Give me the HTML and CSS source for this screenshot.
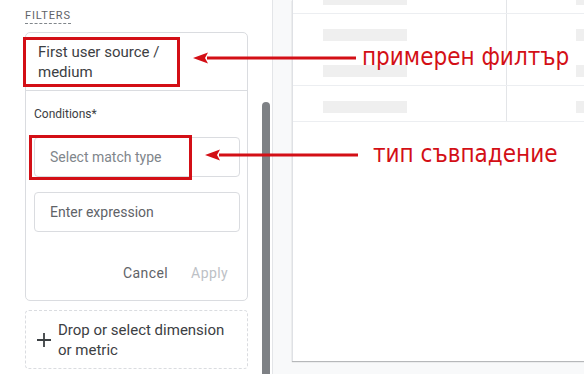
FILE: index.html
```html
<!DOCTYPE html>
<html lang="en">
<head>
<meta charset="utf-8">
<link rel="stylesheet" href="styles.css">
</head>
<body>
<div class="page">
  <aside class="panel">
    <div class="panel-inner">
      <div class="section-label">FILTERS</div>
      <div class="filter-card">
        <div class="filter-head">First user source /<br>medium</div>
        <div class="filter-body">
          <div class="cond-label">Conditions*</div>
          <div class="field placeholder">Select match type</div>
          <div class="field text">Enter expression</div>
          <div class="actions">
            <span class="btn cancel">Cancel</span>
            <span class="btn apply">Apply</span>
          </div>
        </div>
      </div>
      <div class="drop-zone">
        <svg class="plus" width="16" height="16" viewBox="0 0 16 16"><path d="M8 1v14M1 8h14" stroke="#3c4043" stroke-width="1.8" fill="none"/></svg>
        <span>Drop or select dimension<br>or metric</span>
      </div>
    </div>
    <div class="scrollbar"></div>
  </aside>
  <main class="canvas">
    <div class="table-card">
      <div class="trow top">
        <div class="cell c1"><span class="bar b-top"></span></div>
        <div class="cell c2"><span class="bar b-top"></span></div>
      </div>
      <div class="trow double">
        <div class="cell c1"><span class="bar"></span><span class="bar"></span></div>
        <div class="cell c2"><span class="bar"></span><span class="bar"></span></div>
      </div>
      <div class="trow">
        <div class="cell c1"><span class="bar"></span></div>
        <div class="cell c2"><span class="bar"></span></div>
      </div>
    </div>
  </main>
</div>

<div class="mark mark-1"></div>
<div class="mark mark-2"></div>
<svg class="arrow arrow-1" width="170" height="14" viewBox="0 0 170 14"><path d="M14 7H163" stroke="#d30f16" stroke-width="3"/><path d="M0 7L15 1.5L12 7L15 12.5Z" fill="#d30f16"/></svg>
<svg class="arrow arrow-2" width="160" height="14" viewBox="0 0 160 14"><path d="M14 7H153" stroke="#d30f16" stroke-width="3"/><path d="M0 7L15 1.5L12 7L15 12.5Z" fill="#d30f16"/></svg>
<div class="note note-1">примерен филтър</div>
<div class="note note-2">тип съвпадение</div>
</body>
</html>
```

FILE: styles.css
```css
* { box-sizing: border-box; }
html, body { margin: 0; padding: 0; }
body {
  width: 584px;
  height: 374px;
  overflow: hidden;
  font-family: Roboto, "Liberation Sans", Arial, sans-serif;
  color: #3c4043;
  background: #f8f9fa;
  position: relative;
}
.page {
  display: flex;
  height: 374px;
  overflow: hidden;
}
.panel {
  width: 273px;
  flex: none;
  background: #fff;
  border-right: 1px solid #e3e5e8;
  display: flex;
  position: relative;
  overflow: hidden;
}
.panel-inner {
  width: 248px;
  padding: 9px 0 0 25px;
}
.section-label {
  width: max-content;
  font-size: 11px;
  letter-spacing: 0.9px;
  color: #5f6368;
  line-height: 13px;
  padding-bottom: 1px;
  border-bottom: 1px dashed #80868b;
  margin-bottom: 8px;
}
.filter-card {
  border: 1px solid #dadce0;
  border-radius: 5px;
  background: #fff;
}
.filter-head {
  font-size: 15px;
  line-height: 20px;
  padding: 9px 12px 8px 12px;
  border-bottom: 1px solid #dadce0;
  color: #3c4043;
}
.filter-body {
  padding: 15px 7px 0 8px;
}
.cond-label {
  font-size: 12px;
  line-height: 16px;
  color: #3c4043;
  margin-bottom: 15px;
}
.field {
  height: 40px;
  border: 1px solid #dadce0;
  border-radius: 4px;
  font-size: 14px;
  line-height: 38px;
  padding-left: 15px;
}
.field.placeholder { color: #80868b; margin-bottom: 15px; }
.field.text { color: #5f6368; }
.actions {
  display: flex;
  justify-content: flex-end;
  gap: 23px;
  padding: 31px 12px 17px 0;
}
.btn {
  font-size: 14px;
  font-weight: 400;
  line-height: 20px;
  letter-spacing: 0.4px;
}
.cancel { color: #5f6368; }
.apply { color: #bdc1c6; }
.drop-zone {
  margin-top: 9px;
  height: 59px;
  border: 1px dashed #dadce0;
  border-radius: 4px;
  display: flex;
  align-items: center;
  gap: 6px;
  padding-left: 10px;
  font-size: 15px;
  line-height: 20px;
  color: #3c4043;
}
.plus { flex: none; margin-top: 1px; }
.scrollbar {
  position: absolute;
  left: 262px;
  top: 102px;
  width: 8px;
  height: 272px;
  border-radius: 4px 4px 0 0;
  background: #7e8185;
}
.canvas {
  flex: 1;
  min-width: 0;
  padding: 0 0 13px 19px;
  display: flex;
}
.table-card {
  flex: 1;
  min-width: 0;
  overflow: hidden;
  background: #fff;
  border-left: 1px solid #dfe1e5;
  box-shadow: 0 1px 1px rgba(60,64,67,0.35);
}
.trow {
  display: flex;
  height: 36px;
  border-bottom: 1px solid #eceef1;
}
.trow.top { height: 14px; }
.trow.double { height: 72px; }
.cell {
  display: flex;
  flex-direction: column;
  gap: 24px;
  padding-top: 15px;
}
.trow.top .cell { padding-top: 0; }
.c1 { width: 214px; flex: none; padding-left: 30px; border-right: 1px solid #e3e5e8; }
.c2 { flex: 1; min-width: 0; padding-left: 69px; overflow: hidden; }
.bar {
  display: block;
  width: 84px;
  flex: none;
  height: 12px;
  background: #efefef;
}
.b-top { height: 5px; }
.mark {
  position: absolute;
  border: 3px solid #d30f16;
}
.mark-1 { left: 23px; top: 37px; width: 157px; height: 50px; }
.mark-2 { left: 29px; top: 135px; width: 163px; height: 45px; }
.arrow { position: absolute; }
.arrow-1 { left: 193px; top: 51px; }
.arrow-2 { left: 205px; top: 148px; }
.note {
  position: absolute;
  font-family: "DejaVu Sans Condensed", "DejaVu Sans", sans-serif;
  font-size: 24px;
  line-height: 28px;
  color: #d30f16;
  white-space: nowrap;
}
.note-1 { left: 362px; top: 43px; }
.note-2 { left: 373px; top: 140px; }
```
